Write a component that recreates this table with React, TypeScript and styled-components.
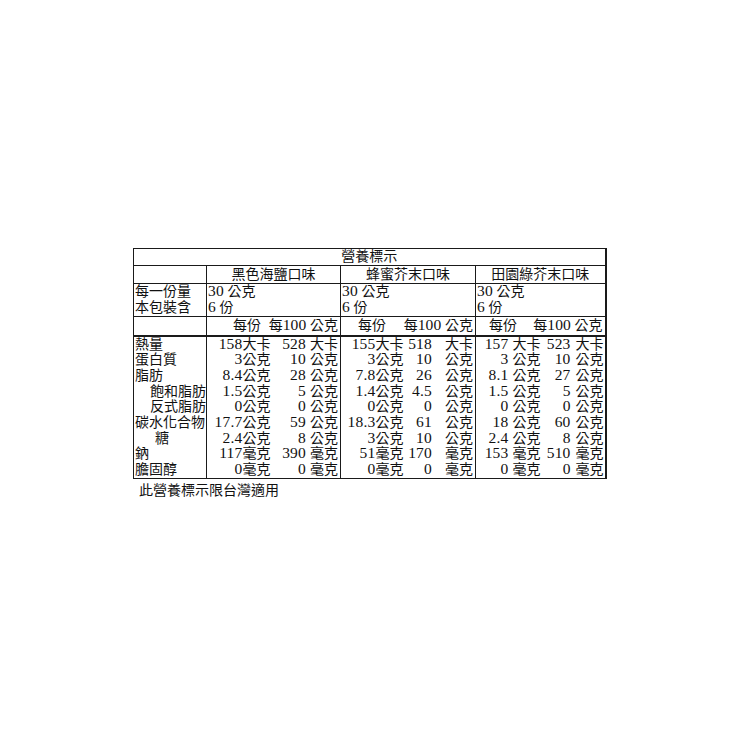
import React from "react";
import styled, { createGlobalStyle } from "styled-components";

type Flavor = {
	name: string;
	headPad: number;
	gapA: number;
	gapB: number;
};

type Row = {
	label: string;
	indent: number;
	unit: string;
	values: [string, string][];
};

const flavors: Flavor[] = [
	{ name: "黑色海鹽口味", headPad: 26, gapA: 0, gapB: 4 },
	{ name: "蜂蜜芥末口味", headPad: 17, gapA: 0, gapB: 13 },
	{ name: "田園綠芥末口味", headPad: 13, gapA: 4, gapB: 5 },
];

const rows: Row[] = [
	{ label: "熱量", indent: 0, unit: "大卡", values: [["158", "528"], ["155", "518"], ["157", "523"]] },
	{ label: "蛋白質", indent: 0, unit: "公克", values: [["3", "10"], ["3", "10"], ["3", "10"]] },
	{ label: "脂肪", indent: 0, unit: "公克", values: [["8.4", "28"], ["7.8", "26"], ["8.1", "27"]] },
	{ label: "飽和脂肪", indent: 15, unit: "公克", values: [["1.5", "5"], ["1.4", "4.5"], ["1.5", "5"]] },
	{ label: "反式脂肪", indent: 15, unit: "公克", values: [["0", "0"], ["0", "0"], ["0", "0"]] },
	{ label: "碳水化合物", indent: 0, unit: "公克", values: [["17.7", "59"], ["18.3", "61"], ["18", "60"]] },
	{ label: "糖", indent: 20, unit: "公克", values: [["2.4", "8"], ["3", "10"], ["2.4", "8"]] },
	{ label: "鈉", indent: 0, unit: "毫克", values: [["117", "390"], ["51", "170"], ["153", "510"]] },
	{ label: "膽固醇", indent: 0, unit: "毫克", values: [["0", "0"], ["0", "0"], ["0", "0"]] },
];

const colWidths = [73, 66, 68, 65, 70, 67, 63];

const App = () => {
	return (
		<Page>
			<GlobalStyle />
			<Table>
				<colgroup>
					{colWidths.map((w, i) => (
						<col key={i} style={{ width: w }} />
					))}
				</colgroup>
				<tbody>
					<TitleRow>
						<TitleCell colSpan={7}>營養標示</TitleCell>
					</TitleRow>
					<FlavorRow>
						<BlankCell />
						{flavors.map((f) => (
							<FlavorCell key={f.name} colSpan={2}>
								{f.name}
							</FlavorCell>
						))}
					</FlavorRow>
					<ServingRow>
						<ServingLabel>
							每一份量
							<br />
							本包裝含
						</ServingLabel>
						{flavors.map((f) => (
							<ServingCell key={f.name} colSpan={2}>
								<Num>30</Num> 公克
								<br />
								<Num>6</Num> 份
							</ServingCell>
						))}
					</ServingRow>
					<HeadRow>
						<BlankCell />
						{flavors.map((f) => (
							<HeadCell key={f.name} colSpan={2}>
								<HeadInner $pad={f.headPad}>
									<span>每份</span>
									<span>
										每<Num>100</Num> 公克
									</span>
								</HeadInner>
							</HeadCell>
						))}
					</HeadRow>
					{rows.map((r) => (
						<DataRow key={r.label}>
							<LabelCell $indent={r.indent}>{r.label}</LabelCell>
							{r.values.map(([a, b], fi) => (
								<React.Fragment key={fi}>
									<ValueCell>
										<Amount $gap={flavors[fi].gapA}>
											<Num>{a}</Num>
											<span>{r.unit}</span>
										</Amount>
									</ValueCell>
									<ValueCell $edge $last={fi === 2}>
										<Amount $gap={flavors[fi].gapB}>
											<Num>{b}</Num>
											<span>{r.unit}</span>
										</Amount>
									</ValueCell>
								</React.Fragment>
							))}
						</DataRow>
					))}
				</tbody>
			</Table>
			<Footnote>此營養標示限台灣適用</Footnote>
		</Page>
	);
};

export default App;

const GlobalStyle = createGlobalStyle`
	body {
		margin: 0;
		background: #ffffff;
	}
`;

const Page = styled.div`
	width: 740px;
	height: 740px;
	box-sizing: border-box;
	padding: 248px 0 0 133px;
	background: #ffffff;

	font-family: "Liberation Serif", "Noto Sans CJK TC", serif;
	font-size: 14px;
	color: #111111;
`;

const Num = styled.span`
	font-size: 15.5px;
	line-height: 12px;
	letter-spacing: 0.2px;
`;

const Table = styled.table`
	width: 472px;
	table-layout: fixed;
	border-collapse: collapse;
	border: 1px solid #1a1a1a;
	border-right: 2px solid #1a1a1a;

	td {
		padding: 0;
		white-space: nowrap;
		overflow: visible;
	}
`;

const TitleRow = styled.tr`
	height: 17px;
`;

const TitleCell = styled.td`
	text-align: center;
	line-height: 16px;
	border-bottom: 1px solid #1a1a1a;
`;

const FlavorRow = styled.tr`
	height: 18px;
`;

const BlankCell = styled.td`
	border-right: 1px solid #1a1a1a;
`;

const FlavorCell = styled.td`
	text-align: center;
	line-height: 17px;
	border-right: 1px solid #1a1a1a;
`;

const ServingRow = styled.tr`
	height: 33px;
	border-top: 1px solid #1a1a1a;
	border-bottom: 1px solid #1a1a1a;
`;

const ServingLabel = styled.td`
	line-height: 15.5px;
	padding-left: 1px !important;
	vertical-align: top;
	border-right: 1px solid #1a1a1a;
`;

const ServingCell = styled.td`
	line-height: 15.5px;
	padding-left: 1px !important;
	vertical-align: top;
	border-right: 1px solid #1a1a1a;
`;

const HeadRow = styled.tr`
	height: 19px;
	border-bottom: 2px solid #1a1a1a;
`;

const HeadCell = styled.td`
	line-height: 17px;
	border-right: 1px solid #1a1a1a;
`;

const HeadInner = styled.div<{ $pad: number }>`
	display: flex;
	justify-content: space-between;
	align-items: baseline;
	height: 17px;
	padding-left: ${(p) => p.$pad}px;
	padding-right: 2px;
`;

const DataRow = styled.tr`
	height: 15.7px;
`;

const LabelCell = styled.td<{ $indent: number }>`
	line-height: 15.7px;
	padding-left: ${(p) => 1 + p.$indent}px !important;
	border-right: 1px solid #1a1a1a;
`;

const ValueCell = styled.td<{ $edge?: boolean; $last?: boolean }>`
	line-height: 15.7px;
	padding-right: ${(p) => (p.$last ? 1 : 2)}px !important;
	border-right: ${(p) => (p.$edge ? "1px solid #1a1a1a" : "none")};
`;

const Amount = styled.div<{ $gap: number }>`
	display: flex;
	justify-content: flex-end;
	align-items: baseline;
	gap: ${(p) => p.$gap}px;
	line-height: 15.7px;
	height: 15.7px;
`;

const Footnote = styled.div`
	margin-top: 3px;
	padding-left: 6px;
	line-height: 18px;
`;
